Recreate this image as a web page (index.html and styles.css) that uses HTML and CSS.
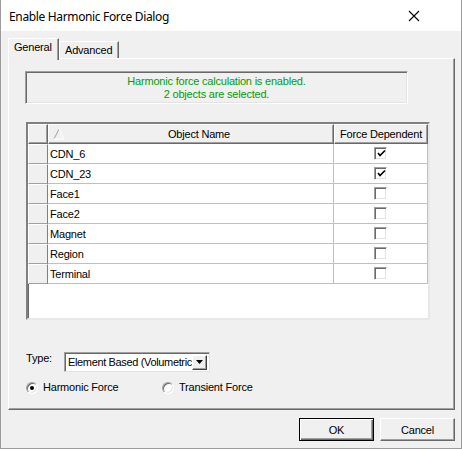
FILE: index.html
```html
<!DOCTYPE html>
<html>
<head>
<meta charset="utf-8">
<link rel="stylesheet" href="styles.css">
</head>
<body>
<div class="window">
  <div class="titlebar">
    <span class="title">Enable Harmonic Force Dialog</span>
    <svg class="close" width="12" height="12" viewBox="0 0 12 12"><path d="M1 1 L11 11 M11 1 L1 11" stroke="#000" stroke-width="1.1" fill="none"/></svg>
  </div>
  <div class="client">
    <div class="tabs">
      <div class="tab active">General</div>
      <div class="tab">Advanced</div>
    </div>
    <div class="panel">
      <div class="status">Harmonic force calculation is enabled.<br>2 objects are selected.</div>
      <div class="grid">
        <table class="gtable">
          <colgroup><col class="c-rh"><col class="c-name"><col class="c-force"></colgroup>
          <thead>
            <tr>
              <th class="hdr rh"></th>
              <th class="hdr name-h">
                <svg class="sort" width="12" height="12" viewBox="0 0 12 12"><path d="M1 11 L6 1" stroke="#a0a0a0" fill="none"/><path d="M6 1 L11 11 L1 11" stroke="#ffffff" fill="none"/></svg>
                <span class="hdr-text">Object Name</span>
              </th>
              <th class="hdr force-h">Force Dependent</th>
            </tr>
          </thead>
          <tbody>
            <tr><td class="rh"></td><td class="cell">CDN_6</td><td class="cell chk"><span class="box"><svg width="9" height="9" viewBox="0 0 9 9"><path d="M1 4 L3 6.5 L8 1.5" stroke="#000" stroke-width="1.6" fill="none"/></svg></span></td></tr>
            <tr><td class="rh"></td><td class="cell">CDN_23</td><td class="cell chk"><span class="box"><svg width="9" height="9" viewBox="0 0 9 9"><path d="M1 4 L3 6.5 L8 1.5" stroke="#000" stroke-width="1.6" fill="none"/></svg></span></td></tr>
            <tr><td class="rh"></td><td class="cell">Face1</td><td class="cell chk"><span class="box"></span></td></tr>
            <tr><td class="rh"></td><td class="cell">Face2</td><td class="cell chk"><span class="box"></span></td></tr>
            <tr><td class="rh"></td><td class="cell">Magnet</td><td class="cell chk"><span class="box"></span></td></tr>
            <tr><td class="rh"></td><td class="cell">Region</td><td class="cell chk"><span class="box"></span></td></tr>
            <tr><td class="rh"></td><td class="cell">Terminal</td><td class="cell chk"><span class="box"></span></td></tr>
          </tbody>
        </table>
      </div>
      <div class="type-row">
        <span class="type-label">Type:</span>
        <div class="select">
          <span class="select-text">Element Based (Volumetric)</span>
          <span class="drop"><svg width="7" height="4" viewBox="0 0 7 4"><path d="M0 0 H7 L3.5 4 Z" fill="#000"/></svg></span>
        </div>
      </div>
      <div class="radios">
        <label class="radio first"><span class="dot on"></span>Harmonic Force</label>
        <label class="radio"><span class="dot"></span>Transient Force</label>
      </div>
    </div>
    <div class="buttons">
      <button class="btn default">OK</button>
      <button class="btn">Cancel</button>
    </div>
  </div>
</div>
</body>
</html>
```

FILE: styles.css
```css
html, body {
  margin: 0;
  padding: 0;
  background: #ffffff;
}
.window {
  width: 462px;
  height: 449px;
  box-sizing: border-box;
  border: 1px solid #9c9c9c;
  border-top: none;
  display: flex;
  flex-direction: column;
  font-family: "Liberation Sans", Arial, sans-serif;
  font-size: 11px;
  letter-spacing: -0.2px;
  color: #000;
}
.titlebar {
  height: 31px;
  flex: none;
  background: #fff;
  display: flex;
  align-items: center;
  padding-left: 8px;
  padding-right: 42px;
}
.title {
  font-family: "Noto Sans", sans-serif;
  font-size: 12px;
  letter-spacing: -0.35px;
  flex: 1;
  padding-top: 1px;
}
.close {
  display: block;
  margin-right: -1px;
}
.client {
  flex: 1;
  background: #f0f0f0;
  padding: 7px 6px 0 7px;
  display: flex;
  flex-direction: column;
}
.tabs {
  display: flex;
  align-items: flex-end;
  height: 20px;
  position: relative;
  z-index: 1;
}
.tab {
  box-sizing: border-box;
  height: 17px;
  border-top: 1px solid #fff;
  border-left: 1px solid #fff;
  border-right: 1px solid #696969;
  box-shadow: inset -1px 0 0 #a0a0a0;
  padding: 2px 5px 0 5px;
  background: #f0f0f0;
  line-height: 13px;
}
.tab.active {
  height: 22px;
  margin-bottom: -2px;
  width: 51px;
  padding: 2px 0 0 5px;
}
.tab:not(.active) {
  width: 60px;
  padding-left: 5px;
}
.panel {
  box-sizing: border-box;
  width: 447px;
  height: 352px;
  border-top: 1px solid #fff;
  border-left: 1px solid #fff;
  border-right: 1px solid #696969;
  border-bottom: 1px solid #696969;
  box-shadow: inset -1px -1px 0 #a0a0a0;
  padding: 12px 0 0 16px;
  display: flex;
  flex-direction: column;
}
.status {
  box-sizing: border-box;
  width: 383px;
  height: 33px;
  border-top: 1px solid #a0a0a0;
  border-left: 1px solid #a0a0a0;
  border-right: 1px solid #fff;
  border-bottom: 1px solid #fff;
  box-shadow: inset 1px 1px 0 #696969, inset -1px -1px 0 #e3e3e3;
  color: #00a000;
  text-align: center;
  line-height: 13px;
  padding-top: 3px;
}
.grid {
  box-sizing: border-box;
  margin-top: 18px;
  margin-left: 1px;
  width: 404px;
  height: 198px;
  background: #fff;
  border-top: 2px solid #808080;
  border-left: 2px solid #808080;
  border-right: 2px solid #e8e8e8;
  border-bottom: 2px solid #e8e8e8;
  box-shadow: inset 1px 1px 0 #696969;
}
.gtable {
  border-collapse: separate;
  border-spacing: 0;
  table-layout: fixed;
  width: 400px;
}
.c-rh { width: 20px; }
.c-name { width: 286px; }
.c-force { width: 94px; }
.gtable th, .gtable td {
  box-sizing: border-box;
  height: 20px;
  padding: 0;
  font-weight: normal;
  white-space: nowrap;
  overflow: hidden;
}
.hdr {
  background: #f0f0f0;
  border-top: 1px solid #fff;
  border-left: 1px solid #fff;
  border-right: 1px solid #696969;
  border-bottom: 1px solid #696969;
  box-shadow: inset -1px -1px 0 #a0a0a0;
}
.name-h {
  position: relative;
  text-align: left;
}
.sort {
  position: absolute;
  left: 4px;
  top: 3px;
}
.hdr-text {
  display: block;
  padding-left: 119px;
}
.force-h {
  text-align: center;
}
td.rh {
  background: #f0f0f0;
  border-top: 1px solid #fff;
  border-left: 1px solid #fff;
  border-right: 1px solid #808080;
  border-bottom: 1px solid #a0a0a0;
}
.cell {
  border-right: 1px solid #c0c0c0;
  border-bottom: 1px solid #c0c0c0;
  padding-left: 2px !important;
}
.chk {
  text-align: center;
  padding-left: 0 !important;
}
.box {
  display: inline-block;
  box-sizing: border-box;
  width: 13px;
  height: 13px;
  vertical-align: middle;
  background: #fff;
  border-top: 1px solid #a0a0a0;
  border-left: 1px solid #a0a0a0;
  border-right: 1px solid #fff;
  border-bottom: 1px solid #fff;
  box-shadow: inset 1px 1px 0 #696969, inset -1px -1px 0 #e3e3e3;
  margin-left: -1px;
  margin-top: -1px;
  position: relative;
}
.box svg {
  position: absolute;
  left: 2px;
  top: 1px;
}
.type-row {
  display: flex;
  align-items: flex-start;
  margin-top: 32px;
  margin-left: 1px;
}
.type-label {
  width: 38px;
  line-height: 12px;
  padding-top: 0;
}
.select {
  box-sizing: border-box;
  width: 146px;
  height: 20px;
  background: #fff;
  border: 1px solid #a0a0a0;
  border-right-color: #e3e3e3;
  border-bottom-color: #e3e3e3;
  box-shadow: inset 1px 1px 0 #696969;
  display: flex;
  align-items: center;
  padding: 2px 2px 2px 3px;
  margin-top: 0;
}
.select-text {
  flex: 1;
  overflow: hidden;
  white-space: nowrap;
  letter-spacing: -0.35px;
}
.drop {
  box-sizing: border-box;
  width: 15px;
  height: 15px;
  flex: none;
  background: #f0f0f0;
  border-top: 1px solid #fff;
  border-left: 1px solid #fff;
  border-right: 1px solid #404040;
  border-bottom: 1px solid #404040;
  box-shadow: inset -1px -1px 0 #a0a0a0;
  display: flex;
  align-items: center;
  justify-content: center;
  padding-bottom: 1px;
}
.drop svg { display: block; }
.radios {
  display: flex;
  align-items: center;
  margin-top: 9px;
  margin-left: 1px;
}
.radio {
  display: flex;
  align-items: center;
  line-height: 13px;
}
.radio.first {
  width: 136px;
}
.dot {
  box-sizing: border-box;
  width: 12px;
  height: 12px;
  border-radius: 50%;
  margin-right: 5px;
  background: #fff;
  border: 1px solid;
  border-color: #a0a0a0 #ffffff #ffffff #a0a0a0;
  box-shadow: inset 1px 1px 0 #696969, inset -1px -1px 0 #e3e3e3;
  position: relative;
}
.dot.on::after {
  content: "";
  position: absolute;
  left: 3px;
  top: 3px;
  width: 4px;
  height: 4px;
  border-radius: 50%;
  background: #000;
}
.buttons {
  display: flex;
  justify-content: flex-end;
  gap: 6px;
  margin-top: 8px;
}
.btn {
  box-sizing: border-box;
  width: 75px;
  height: 23px;
  margin: 0;
  padding: 0;
  font-family: "Liberation Sans", Arial, sans-serif;
  font-size: 11px;
  letter-spacing: -0.2px;
  color: #000;
  background: #f0f0f0;
  border-top: 1px solid #fff;
  border-left: 1px solid #fff;
  border-right: 1px solid #696969;
  border-bottom: 1px solid #696969;
  box-shadow: inset -1px -1px 0 #a0a0a0;
}
.btn.default {
  border: 1px solid #000;
  box-shadow: inset 1px 1px 0 #fff, inset -1px -1px 0 #696969, inset -2px -2px 0 #a0a0a0;
}
```
